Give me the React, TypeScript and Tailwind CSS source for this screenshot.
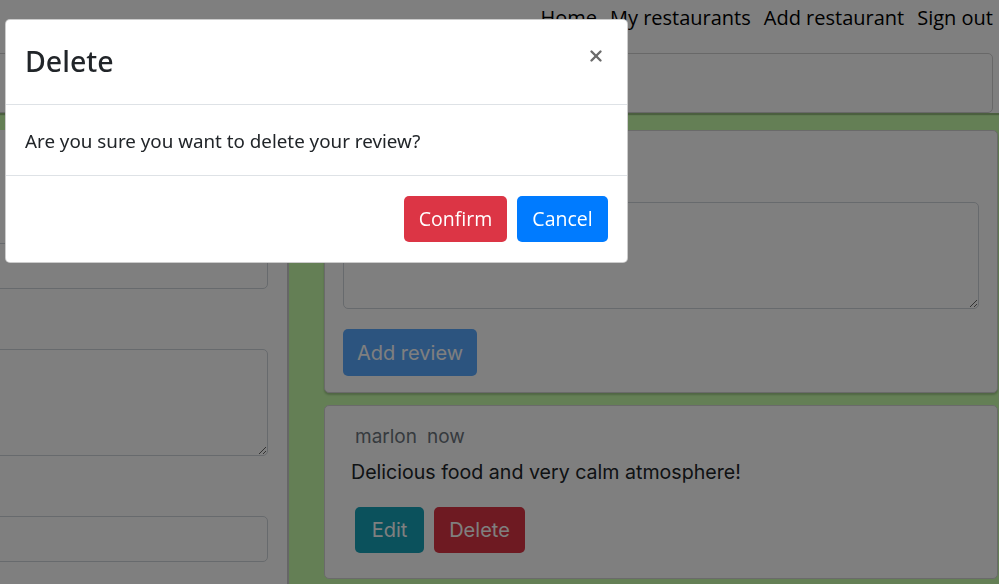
import { X } from "lucide-react";

const navLinks = ["Home", "My restaurants", "Add restaurant", "Sign out"];

const NavBar = () => (
  <nav className="h-[53px] bg-white flex justify-end items-start pr-[6px] pt-[4px] gap-[13px] text-[20px] text-black font-['Open_Sans',sans-serif]">
    {navLinks.map((link) => (
      <a key={link} className="leading-[28px]">
        {link}
      </a>
    ))}
  </nav>
);

const LeftPanel = () => (
  <aside className="w-[289px] shrink-0 bg-white border-r-2 border-[#cccccc] pr-[19px] pt-[113px] overflow-hidden">
    <input className="-ml-4 w-[calc(100%+16px)] h-[46px] border border-[#ced4da] rounded-[5px] block" />
    <div className="h-[60px]" />
    <textarea className="-ml-4 w-[calc(100%+16px)] h-[107px] border border-[#ced4da] rounded-[5px] block" />
    <div className="h-[60px]" />
    <input className="-ml-4 w-[calc(100%+16px)] h-[46px] border border-[#ced4da] rounded-[5px] block" />
  </aside>
);

const ReviewForm = () => (
  <div className="bg-white border border-[#d5d5d5] rounded-[5px] shadow-[0_2px_2px_rgba(0,0,0,0.2)] px-[18px] pt-[18px] pb-[16px] font-['Inter',sans-serif]">
    <h3 className="text-[22px] text-[#212529] h-[53px] leading-[34px]">Leave a review</h3>
    <textarea className="w-full h-[107px] border border-[#ced4da] rounded-[5px] block" />
    <button className="mt-[20px] h-[47px] w-[134px] rounded-[5px] bg-[#007bff] text-white text-[20px] opacity-65">
      Add review
    </button>
  </div>
);

const ReviewCard = () => (
  <div className="mt-[12px] bg-white border border-[#d5d5d5] rounded-[5px] px-[30px] pt-[17px] pb-[25px] font-['Inter',sans-serif]">
    <div className="text-[19px] text-[#6c757d] leading-[28px] flex gap-[10px]">
      <span>marlon</span>
      <span>now</span>
    </div>
    <p className="mt-[7px] -ml-[4px] text-[19.6px] text-[#212529] leading-[28px]">
      Delicious food and very calm atmosphere!
    </p>
    <div className="mt-[21px] flex gap-[10px]">
      <button className="h-[46px] w-[69px] rounded-[5px] bg-[#17a2b8] text-white text-[20px]">
        Edit
      </button>
      <button className="h-[46px] w-[91px] rounded-[5px] bg-[#dc3545] text-white text-[20px]">
        Delete
      </button>
    </div>
  </div>
);

const DeleteModal = () => (
  <div className="fixed inset-0 bg-black/50">
    <div className="absolute left-[5px] top-[19px] w-[623px] bg-white rounded-[5px] border border-black/20 font-['Noto_Sans',sans-serif] text-[#212529]">
      <div className="h-[85px] flex items-center justify-between pl-[19px] pr-[20px] border-b border-[#dee2e6]">
        <h5 className="text-[28.5px] font-medium leading-none -mt-[1px]">Delete</h5>
        <X className="w-[18px] h-[18px] text-[#6b6b6b] -mt-[12px] mr-[2px]" strokeWidth={3.2} />
      </div>
      <div className="h-[71px] flex items-center pl-[19px] pt-[2px] border-b border-[#dee2e6] text-[18.8px]">
        Are you sure you want to delete your review?
      </div>
      <div className="h-[86px] flex items-center justify-end gap-[10px] pr-[19px] font-['Open_Sans',sans-serif]">
        <button className="h-[46px] w-[103px] rounded-[5px] bg-[#dc3545] text-white text-[19.5px]">
          Confirm
        </button>
        <button className="h-[46px] w-[91px] rounded-[5px] bg-[#007bff] text-white text-[19.5px]">
          Cancel
        </button>
      </div>
    </div>
  </div>
);

export default function App() {
  return (
    <div className="w-[999px] h-[584px] overflow-hidden bg-[#c8feaa] relative flex flex-col">
      <NavBar />
      <div className="h-[60px] shrink-0 bg-white shadow-[0_2px_1px_rgba(0,0,0,0.25)] pr-[6px]">
        <div className="h-full -ml-4 border border-[#d0d0d0] rounded-r-[5px]" />
      </div>
      <div className="flex pt-[17px] flex-1">
        <LeftPanel />
        <main className="flex-1 pl-[35px] pr-[1px]">
          <ReviewForm />
          <ReviewCard />
        </main>
      </div>
      <DeleteModal />
    </div>
  );
}
